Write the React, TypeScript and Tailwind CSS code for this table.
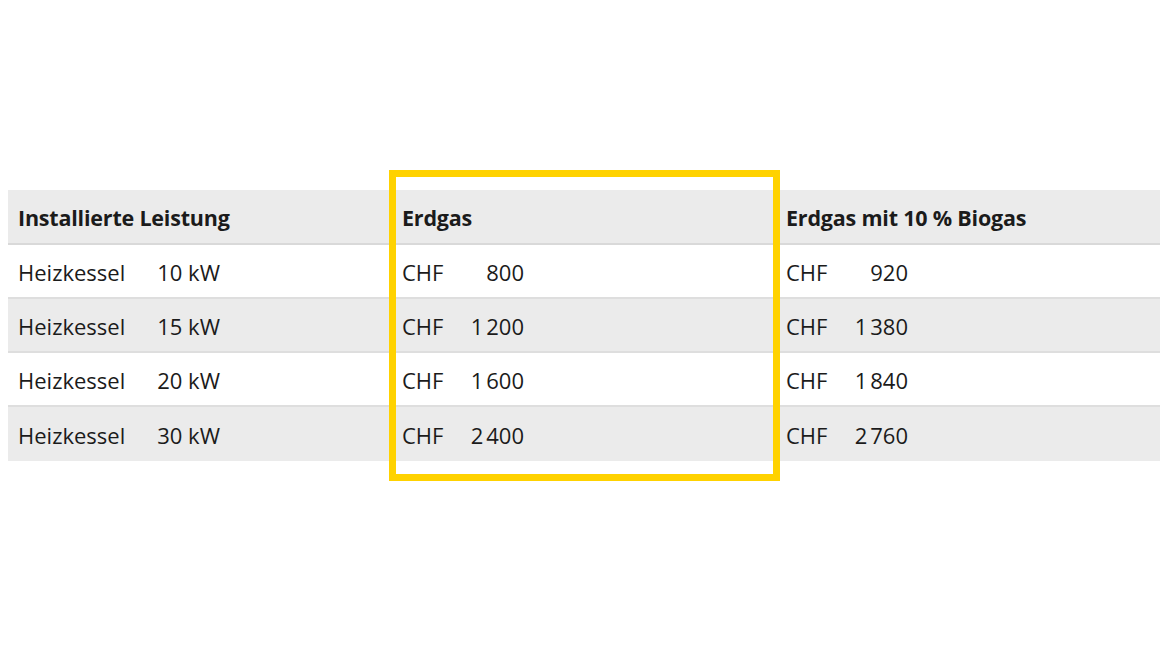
const rows = [
  { kw: "10 kW", gas: "800", bio: "920" },
  { kw: "15 kW", gas: "1\u202F200", bio: "1\u202F380" },
  { kw: "20 kW", gas: "1\u202F600", bio: "1\u202F840" },
  { kw: "30 kW", gas: "2\u202F400", bio: "2\u202F760" },
];

export default function App() {
  return (
    <div
      className="w-[1168px] h-[657px] bg-white text-[#1b1b1b] pt-[190px] px-[8px]"
      style={{ fontFamily: '"Open Sans", "Noto Sans", sans-serif' }}
    >
      <div className="relative">
        <div className="grid grid-cols-3 h-[55px] items-center bg-[#ebebeb] border-b-2 border-[#d9d9d9] text-[21.5px] font-bold tracking-[-0.2px] pt-[3px]">
          <div className="px-[10px]">Installierte Leistung</div>
          <div className="px-[10px]">Erdgas</div>
          <div className="px-[10px]">Erdgas mit 10 % Biogas</div>
        </div>

        {rows.map((r, i) => (
          <div
            key={i}
            className={`grid grid-cols-3 items-center text-[22px] pt-[2px] ${
              i % 2 === 0 ? "bg-white" : "bg-[#ebebeb]"
            } ${i < rows.length - 1 ? "h-[54px] border-b-2 border-[#dedede]" : "h-[54px]"}`}
          >
            <div className="px-[10px]">
              <div className="flex justify-between w-[202px]">
                <span>Heizkessel</span>
                <span>{r.kw}</span>
              </div>
            </div>
            <div className="px-[10px]">
              <div className="flex justify-between w-[122px]">
                <span>CHF</span>
                <span>{r.gas}</span>
              </div>
            </div>
            <div className="px-[10px]">
              <div className="flex justify-between w-[122px]">
                <span>CHF</span>
                <span>{r.bio}</span>
              </div>
            </div>
          </div>
        ))}

        {/* highlight frame around the Erdgas column */}
        <div className="absolute left-[381px] top-[-20px] w-[391px] h-[311px] border-[7px] border-[#ffd200] pointer-events-none" />
      </div>
    </div>
  );
}
